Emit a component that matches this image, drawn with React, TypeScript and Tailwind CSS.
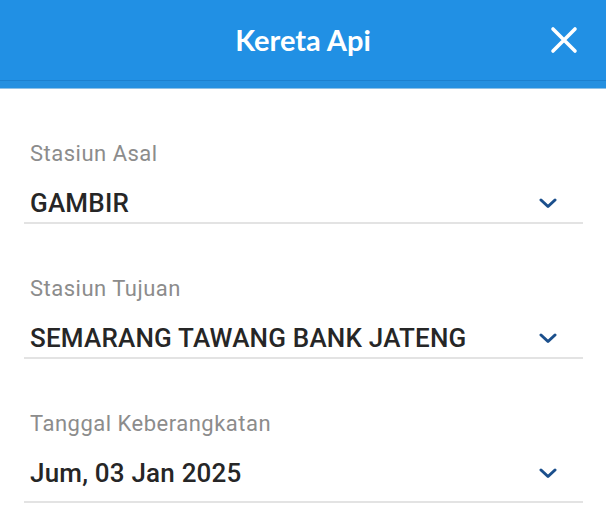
const fields = [
  { label: "Stasiun Asal", value: "GAMBIR", tall: false },
  { label: "Stasiun Tujuan", value: "SEMARANG TAWANG BANK JATENG", tall: false },
  { label: "Tanggal Keberangkatan", value: "Jum, 03 Jan 2025", tall: true },
];

function CloseIcon() {
  return (
    <svg width="30" height="30" viewBox="0 0 30 30" fill="none" stroke="white" strokeWidth="3.6" strokeLinecap="round">
      <path d="M4 4 L26 26 M26 4 L4 26" />
    </svg>
  );
}

function Chevron() {
  return (
    <svg width="18" height="11" viewBox="0 0 18 11" fill="none" stroke="#1b4f8c" strokeWidth="3" strokeLinecap="round" strokeLinejoin="round">
      <path d="M2 2 L9 8.5 L16 2" />
    </svg>
  );
}

export default function App() {
  return (
    <div className="min-h-[522px] w-[606px] bg-white font-['Roboto','Liberation_Sans',sans-serif]">
      <header className="relative flex h-[80px] items-center justify-center bg-[#2190e4]">
        <h1 className="font-['Lato','Liberation_Sans',sans-serif] text-[29px] font-bold text-white">
          Kereta Api
        </h1>
        <button className="absolute right-[27px] top-[25px]">
          <CloseIcon />
        </button>
      </header>
      <div className="h-[9px] border-t border-b border-t-[#1c80cf] border-b-[#8fc1e6] bg-[#2590e0]" />

      <main className="flex flex-col gap-[53px] pl-6 pr-[23px] pt-[53px]">
        {fields.map((f) => (
          <div key={f.label} className="flex flex-col border-b-2 border-[#e3e3e3]">
            <span className="pl-1.5 text-[22px] leading-[24px] tracking-[0.5px] text-[#8c8c8c]">{f.label}</span>
            <div
              className={`mt-[20px] flex items-start justify-between pl-1.5 pr-[26px] ${f.tall ? "h-[45px]" : "h-[36px]"}`}
            >
              <span className="text-[26px] font-medium leading-[34px] tracking-[0.2px] text-[#262626]">{f.value}</span>
              <div className="pt-[12px]">
                <Chevron />
              </div>
            </div>
          </div>
        ))}
      </main>
    </div>
  );
}
